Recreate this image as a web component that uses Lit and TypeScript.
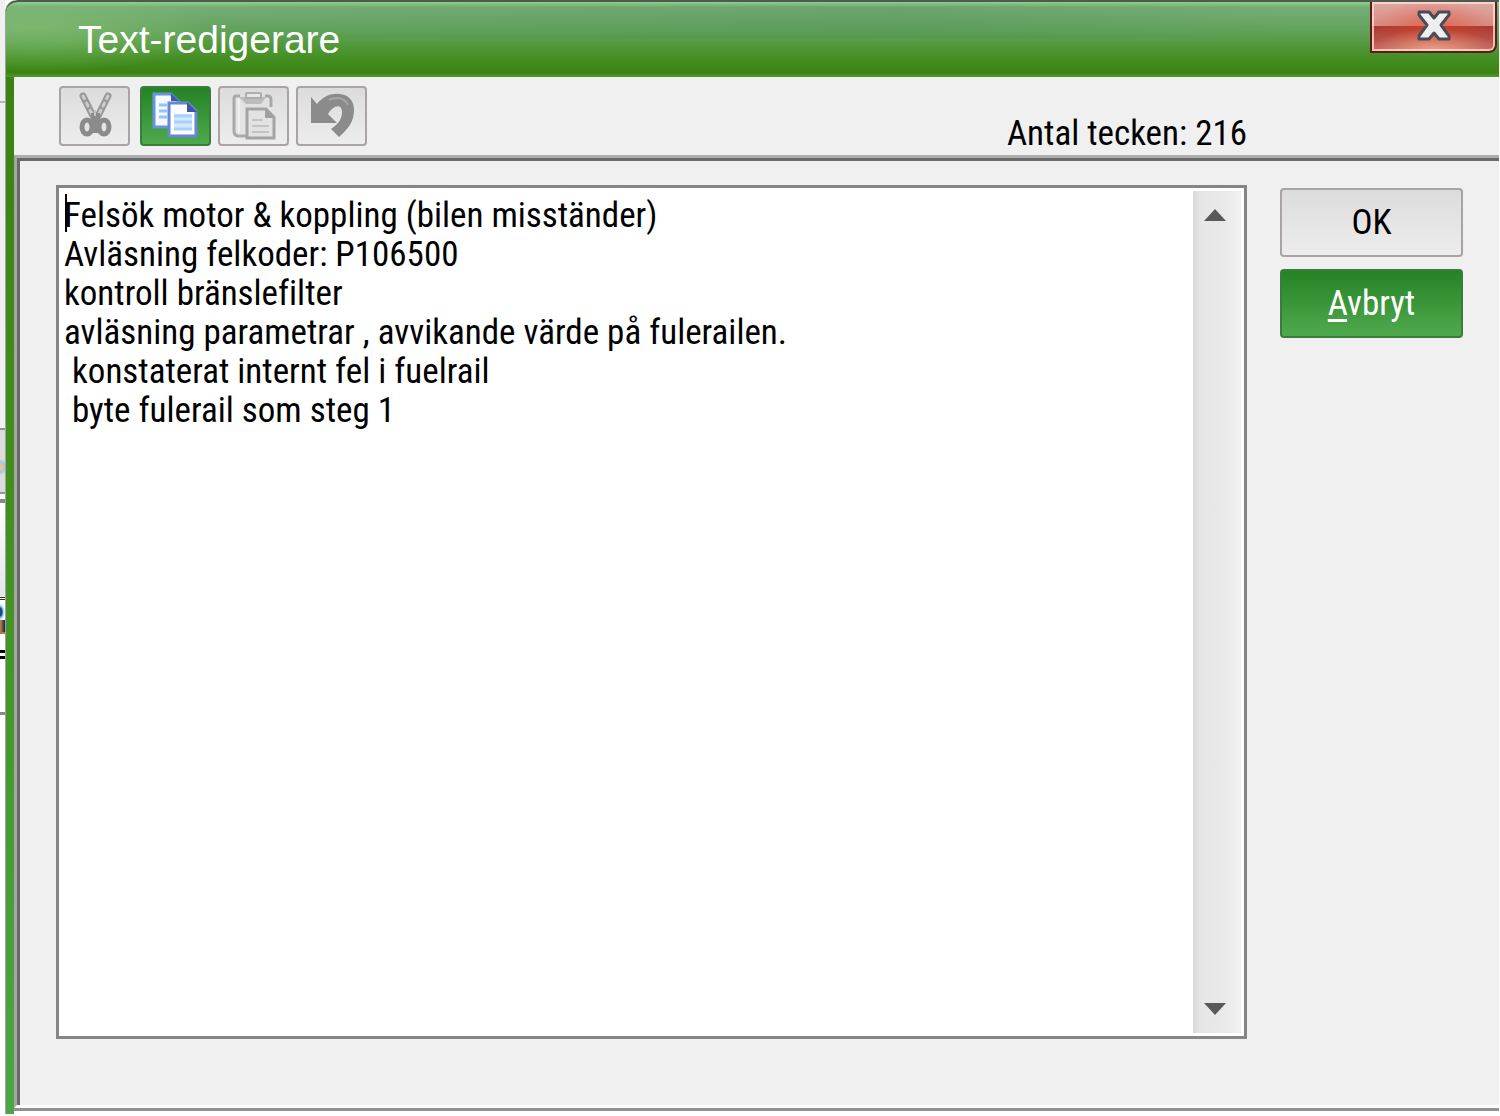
import { LitElement, html, css, svg } from "lit";
import { customElement, state } from "lit/decorators.js";

const NOTE = [
  "Felsök motor & koppling (bilen misständer)",
  "Avläsning felkoder: P106500",
  "kontroll bränslefilter",
  "avläsning parametrar , avvikande värde på fulerailen.",
  " konstaterat internt fel i fuelrail",
  " byte fulerail som steg 1",
].join("\n");

const cutIcon = svg`
  <g fill="none" stroke-linecap="round">
    <path d="M16 8 26 28M41 8 31 28" stroke="#999999" stroke-width="7"/>
    <path d="M16 8 26 28M41 8 31 28" stroke="#cccccc" stroke-width="3" stroke-dasharray="3 5"/>
  </g>
  <ellipse cx="20" cy="39" rx="5" ry="7" fill="#e4e4e4" stroke="#8b8b8b" stroke-width="5"/>
  <ellipse cx="37" cy="39" rx="5" ry="7" fill="#e4e4e4" stroke="#8b8b8b" stroke-width="5"/>
  <path d="M24 25h9v20h-9z" fill="#8b8b8b"/>
  <path d="M28 22v6" stroke="#c4c4c4" stroke-width="2"/>`;

const copyIcon = svg`
  <path d="M6 6h17l9 9v24H6z" fill="#f4f9ff" stroke="#6b92dc" stroke-width="3"/>
  <path d="M23 5v8h8z" fill="#3e5cae"/>
  <path d="M11 17h8M11 23h8M11 29h8" stroke="#92c6f8" stroke-width="3"/>
  <path d="M21 15h19l8 8v25H21z" fill="#fbfdff" stroke="#6687d2" stroke-width="3"/>
  <path d="M39 14v10h10z" fill="#3e58a6"/>
  <path d="M26 26h18v16H26z" fill="#d3e9ff"/>
  <path d="M26 28h18M26 34h18M26 41h18" stroke="#a8d2fb" stroke-width="3"/>`;

const pasteIcon = svg`
  <path d="M14 8h-4q-2 0-2 3v32q0 5 5 5h8M39 8h3q3 0 3 4v7" fill="#e4e4e4" stroke="#a9a9a9" stroke-width="3"/>
  <path d="M13 11v33" stroke="#f0f0f0" stroke-width="2"/>
  <path d="M13 9h27l-5 7H20z" fill="#bcbcbc"/>
  <path d="M20 10V6q0-1 1-1h13q1 0 1 1v4z" fill="#e6e6e6" stroke="#adadad" stroke-width="2"/>
  <path d="M21 21h19l8 8v21H21z" fill="#e2e2e2" stroke="#a4a4a4" stroke-width="3"/>
  <path d="M39 20v10h10z" fill="#a0a0a0"/>
  <path d="M26 32h11M26 38h17M26 44h17" stroke="#c4c4c4" stroke-width="2"/>`;

const undoIcon = svg`
  <path d="M7 9l6 7C19 8 28 5 36 6c10 1 14 8 14 16 0 12-6 19-15 27l-8-8c8-5 11-11 11-17 0-9-9-7-14 2l9 9H7z" fill="#8b8b8b"/>
  <path d="M25 12c8-4 16-2 19 5" fill="none" stroke="#a6a6a6" stroke-width="2"/>`;

const TOOLS = [
  { label: "Klipp ut", art: cutIcon, active: false },
  { label: "Kopiera", art: copyIcon, active: true },
  { label: "Klistra in", art: pasteIcon, active: false },
  { label: "Ångra", art: undoIcon, active: false },
];

@customElement("app-root")
export class AppRoot extends LitElement {
  @state() private note = NOTE;
  @state() private count = 216;

  static styles = css`
    :host {
      display: flex;
      min-height: 100vh;
      box-sizing: border-box;
      background: #fff;
      color: #000;
      font-family: "Liberation Sans Narrow", "Roboto Condensed", Roboto, "Liberation Sans", sans-serif;
      font-size: 35px;
      line-height: 39px;
      font-variant-ligatures: none;
    }
    * { box-sizing: border-box; }
    button { font: inherit; color: inherit; margin: 0; padding: 0; }

    .behind { flex: none; width: 5px; display: flex; flex-direction: column; overflow: hidden; }
    .seg { flex: none; }
    .s1 { height: 103px; background: #f0f0f0; border-bottom: 2px solid #b5b5b5; }
    .s2 { height: 327px; background: #f0f0f0; border-bottom: 2px solid #8e9198; }
    .s3 { height: 64px; background: radial-gradient(circle at 0 37px, #e6c496 2px, #a5c7e0 5px, transparent 8px) #dcdcdc; border-bottom: 2px solid #8f98a5; }
    .s4 { height: 9px; background: #fff; border-bottom: 4px solid #898989; }
    .s5 { height: 97px; background: linear-gradient(#fff, #e4e5e9); border-bottom: 3px double #333; }
    .s6 { height: 20px; background: radial-gradient(ellipse 5px 9px at 0 8px, #23457c 40%, #9bdcf5, #fff); border-top: 4px solid #fff; }
    .s7 { height: 14px; background: linear-gradient(90deg, #c98b3c, #141b60); border-bottom: 2px solid #b9773c; }
    .s8 { height: 25px; background: #fff; border-bottom: 9px double #000; }
    .s9 { height: 56px; background: #fff; border-bottom: 3px solid #8a8a8a; }

    .window {
      flex: 1;
      min-width: 0;
      display: flex;
      flex-direction: column;
      margin-right: 1px;
      margin-bottom: 2px;
      padding-left: 8px;
      border-left: 1px solid #9aa79a;
      border-radius: 12px 0 0 0;
      overflow: hidden;
      background: linear-gradient(#38800c, #3f8e1c 40%, #4ba643) 0 0 / 8px 100% no-repeat;
    }
    .title {
      display: flex;
      align-items: flex-start;
      justify-content: space-between;
      height: 77px;
      margin-left: -8px;
      padding: 0 2px 0 72px;
      border-top: 2px solid #4d5a4d;
      border-radius: 12px 0 0 0;
      background:
        linear-gradient(#8fd08c, rgba(143, 208, 140, 0)) 0 0 / 100% 5px no-repeat,
        radial-gradient(ellipse 190px 44px at 28px 26px, rgba(132, 190, 116, .75), transparent),
        linear-gradient(90deg, transparent 10%, rgba(60, 125, 80, .18) 60%, transparent 86%) 0 0 / 100% 36px no-repeat,
        linear-gradient(#78ae79 4%, #62a35c 38%, #4b952f 65%, #3a830e 94%, #55943a);
    }
    h1 {
      margin: 0;
      padding-top: 16px;
      font: 400 39px/44px "Liberation Sans", Arial, sans-serif;
      color: #fff;
    }
    .close {
      width: 127px;
      height: 51px;
      display: flex;
      justify-content: center;
      padding-top: 7px;
      border: 2px solid #5d1d18;
      border-top: 0;
      border-radius: 0 0 8px 0;
      box-shadow: inset 0 0 0 2px rgba(255, 225, 218, .75);
      background:
        radial-gradient(ellipse 65px 22px at 50% 100%, rgba(250, 190, 160, .7), transparent),
        radial-gradient(ellipse 60px 26px at 50% 50%, rgba(226, 70, 40, .55), transparent),
        linear-gradient(#dfa8a4, #d98c82 48%, #a83a31 50%, #c4675c);
    }
    .close svg { width: 36px; height: 34px; }

    .bar {
      display: flex;
      justify-content: space-between;
      height: 78px;
      padding: 9px 252px 0 45px;
      background: #f0f0f0;
    }
    .tools { display: flex; gap: 7px; }
    .tool {
      width: 71px;
      height: 60px;
      padding: 0;
      display: flex;
      justify-content: center;
      align-items: center;
    }
    .tool:first-child { margin-right: 3px; }
    .tool svg { width: 56px; height: 56px; }
    .count { align-self: flex-end; padding-bottom: 2px; white-space: pre; }

    .btn {
      border: 2px solid #a9a3a3;
      border-radius: 4px;
      background: linear-gradient(#dcdcdc, #ededed);
    }
    .btn.green {
      border-color: #3a7c3c;
      background: linear-gradient(#258325, #4faa4d);
      color: #fff;
    }

    .body {
      flex: 1;
      display: flex;
      gap: 33px;
      padding: 24px 36px 66px;
      border-top: 3px solid #696969;
      border-left: 3px solid #696969;
      background: #f0f0f0;
    }
    .frame {
      flex: 1;
      display: flex;
      flex-direction: column;
      border-top: 3px solid #adadad;
      border-left: 3px solid #a6a6a6;
      border-bottom: 3px solid #fff;
      box-shadow: 0 3px 0 #929292;
      margin-bottom: 6px;
    }
    .editor {
      position: relative;
      flex: 1;
      min-width: 0;
      display: flex;
      border: 3px solid #858585;
      background: #fff;
    }
    textarea {
      flex: 1;
      min-width: 0;
      margin: 0;
      padding: 8px 0 0 5px;
      border: 0;
      outline: 0;
      resize: none;
      overflow: hidden;
      background: transparent;
      color: #000;
      font: inherit;
      font-variant-ligatures: none;
    }
    .caret {
      position: absolute;
      left: 6px;
      top: 6px;
      width: 2px;
      height: 38px;
      background: #000;
    }
    .scroll {
      width: 48px;
      margin: 3px 3px 3px 0;
      display: flex;
      flex-direction: column;
      justify-content: space-between;
      background: linear-gradient(90deg, #d9d9d9, #e6e6e6 8px, #e9e9e9 30px, #f1f1f1);
    }
    .arrow { height: 48px; border: 0; background: none; display: flex; justify-content: center; align-items: center; }
    .arrow svg { width: 22px; height: 12px; margin-right: 4px; }
    .actions { flex: none; width: 183px; padding-top: 3px; display: flex; flex-direction: column; gap: 12px; }
    .action { height: 69px; }
    .key { text-decoration: underline; text-decoration-thickness: 3px; text-underline-offset: 4px; }
  `;

  private onInput(e: Event) {
    this.note = (e.target as HTMLTextAreaElement).value;
    this.count = this.note.length;
  }

  render() {
    return html`
      <div class="behind" aria-hidden="true">
        ${[1, 2, 3, 4, 5, 6, 7, 8, 9].map((n) => html`<div class="seg s${n}"></div>`)}
      </div>
      <main class="window">
        <header class="title">
          <h1>Text-redigerare</h1>
          <button class="close" aria-label="Stäng">
            <svg viewBox="0 0 36 34" aria-hidden="true">
              <path d="M3 3h10l5 6 5-6h10v3l-8 10 8 11v3H23l-5-6-5 6H3v-3l8-11L3 6z"
                fill="#eeeeee" stroke="#4b4a58" stroke-width="3" stroke-linejoin="round"/>
            </svg>
          </button>
        </header>
        <div class="bar">
          <div class="tools">
            ${TOOLS.map((t) => html`
              <button class="btn tool ${t.active ? "green" : ""}" aria-label=${t.label}>
                <svg viewBox="0 0 56 56" aria-hidden="true">${t.art}</svg>
              </button>`)}
          </div>
          <output class="count">Antal tecken: ${this.count}</output>
        </div>
        <div class="frame">
          <div class="body">
            <div class="editor">
              <textarea aria-label="Text" spellcheck="false" .value=${this.note} @input=${this.onInput}></textarea>
              <span class="caret"></span>
              <div class="scroll">
                <button class="arrow" aria-label="Rulla upp">
                  <svg viewBox="0 0 22 12" aria-hidden="true"><path d="M11 0 22 12H0z" fill="#595959"/></svg>
                </button>
                <button class="arrow" aria-label="Rulla ned">
                  <svg viewBox="0 0 22 12" aria-hidden="true"><path d="M0 0h22L11 12z" fill="#595959"/></svg>
                </button>
              </div>
            </div>
            <div class="actions">
              <button class="btn action">OK</button>
              <button class="btn action green"><span class="key">A</span>vbryt</button>
            </div>
          </div>
        </div>
      </main>
    `;
  }
}
